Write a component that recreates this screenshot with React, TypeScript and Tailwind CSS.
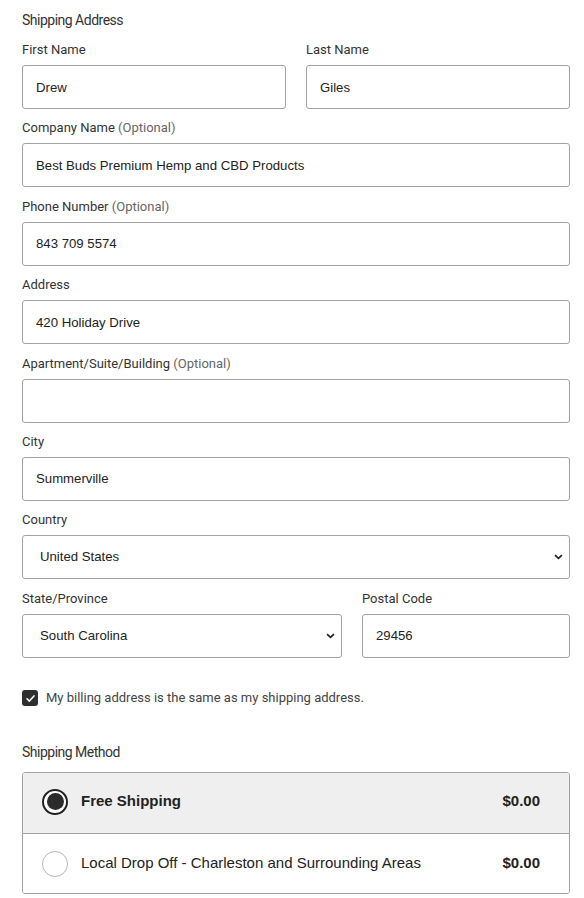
import React from "react";

// ─── Types ────────────────────────────────────────────────────────────────────

interface FieldProps {
  label: string;
  optional?: boolean;
  value?: string;
  className?: string;
}

// ─── Pieces ───────────────────────────────────────────────────────────────────

function Label({ label, optional }: { label: string; optional?: boolean }) {
  return (
    <div className="mb-[7px] text-[13px] leading-[16px] text-[#333] font-['Roboto',sans-serif]">
      {label}
      {optional && <span className="text-[#666]"> (Optional)</span>}
    </div>
  );
}

function TextField({ label, optional, value = "", className = "" }: FieldProps) {
  return (
    <div className={`mb-[11.4px] ${className}`}>
      <Label label={label} optional={optional} />
      <input
        readOnly
        defaultValue={value}
        className="block h-[44px] w-full rounded-[3px] border border-[#a3a3a3] bg-white px-[13px] text-[13.2px] text-[#222] outline-none font-['Liberation_Sans',Arial,sans-serif]"
      />
    </div>
  );
}

function SelectField({ label, value = "", className = "" }: FieldProps) {
  return (
    <div className={`mb-[11.4px] ${className}`}>
      <Label label={label} />
      <div className="relative">
        <select
          defaultValue={value}
          className="block h-[44px] w-full appearance-none rounded-[3px] border border-[#a3a3a3] bg-white pl-[17px] pr-8 text-[13.2px] text-[#222] outline-none font-['Liberation_Sans',Arial,sans-serif]"
        >
          <option>{value}</option>
        </select>
        <svg
          viewBox="0 0 10 7"
          className="pointer-events-none absolute right-[7px] top-1/2 h-[6px] w-[9px] -translate-y-1/2"
          fill="none"
          stroke="#222"
          strokeWidth="2"
        >
          <polyline points="1 1.2 5 5 9 1.2" />
        </svg>
      </div>
    </div>
  );
}

function Radio({ checked }: { checked?: boolean }) {
  if (checked) {
    return (
      <span className="flex h-[26px] w-[26px] shrink-0 items-center justify-center rounded-full border-2 border-[#222] bg-white">
        <span className="h-[17px] w-[17px] rounded-full bg-[#2b2b2b]" />
      </span>
    );
  }
  return <span className="h-[26px] w-[26px] shrink-0 rounded-full border border-[#b5b5b5] bg-white" />;
}

// ─── Page ─────────────────────────────────────────────────────────────────────

export default function App() {
  return (
    <div className="min-h-screen bg-white pl-[22px] pr-[14px] pt-[12px] text-[#333] font-['Roboto',sans-serif]">
      {/* ── Shipping address ──────────────────────────────────────────────── */}
      <h2 className="mb-[14px] text-[14px] leading-[16px] tracking-[-0.5px] text-[#333]">
        Shipping Address
      </h2>

      <div className="flex gap-[20px]">
        <TextField label="First Name" value="Drew" className="flex-1" />
        <TextField label="Last Name" value="Giles" className="flex-1" />
      </div>
      <TextField label="Company Name" optional value="Best Buds Premium Hemp and CBD Products" />
      <TextField label="Phone Number" optional value="843 709 5574" />
      <TextField label="Address" value="420 Holiday Drive" />
      <TextField label="Apartment/Suite/Building" optional />
      <TextField label="City" value="Summerville" />
      <SelectField label="Country" value="United States" />
      <div className="flex gap-[20px]">
        <SelectField label="State/Province" value="South Carolina" className="w-[320px]" />
        <TextField label="Postal Code" value="29456" className="flex-1" />
      </div>

      {/* Billing checkbox */}
      <label className="mt-[21px] flex items-center gap-[8px]">
        <span className="flex h-[16px] w-[16px] items-center justify-center rounded-[3px] bg-[#2f2f2f]">
          <svg viewBox="0 0 12 12" className="h-[11px] w-[11px]" fill="none" stroke="white" strokeWidth="1.8" strokeLinecap="round" strokeLinejoin="round">
            <polyline points="2.2 6.3 4.8 8.8 9.8 3.2" />
          </svg>
        </span>
        <span className="text-[13px] leading-[16px] text-[#444]">
          My billing address is the same as my shipping address.
        </span>
      </label>

      {/* ── Shipping method ───────────────────────────────────────────────── */}
      <h2 className="mt-[38px] mb-[12px] text-[14px] leading-[16px] tracking-[-0.5px] text-[#333]">
        Shipping Method
      </h2>

      <div className="overflow-hidden rounded-[3px] border border-[#a3a3a3] font-['Liberation_Sans',Arial,sans-serif] text-[15px] text-[#222]">
        <div className="flex h-[60px] items-center gap-[13px] bg-[#efefef] pb-[3px] pl-[19px] pr-[29px]">
          <Radio checked />
          <span className="flex-1 font-bold">Free Shipping</span>
          <span className="font-bold">$0.00</span>
        </div>
        <div className="flex h-[60px] items-center gap-[13px] border-t border-[#a3a3a3] bg-white pl-[19px] pr-[29px]">
          <Radio />
          <span className="flex-1">Local Drop Off - Charleston and Surrounding Areas</span>
          <span className="font-bold">$0.00</span>
        </div>
      </div>
    </div>
  );
}
